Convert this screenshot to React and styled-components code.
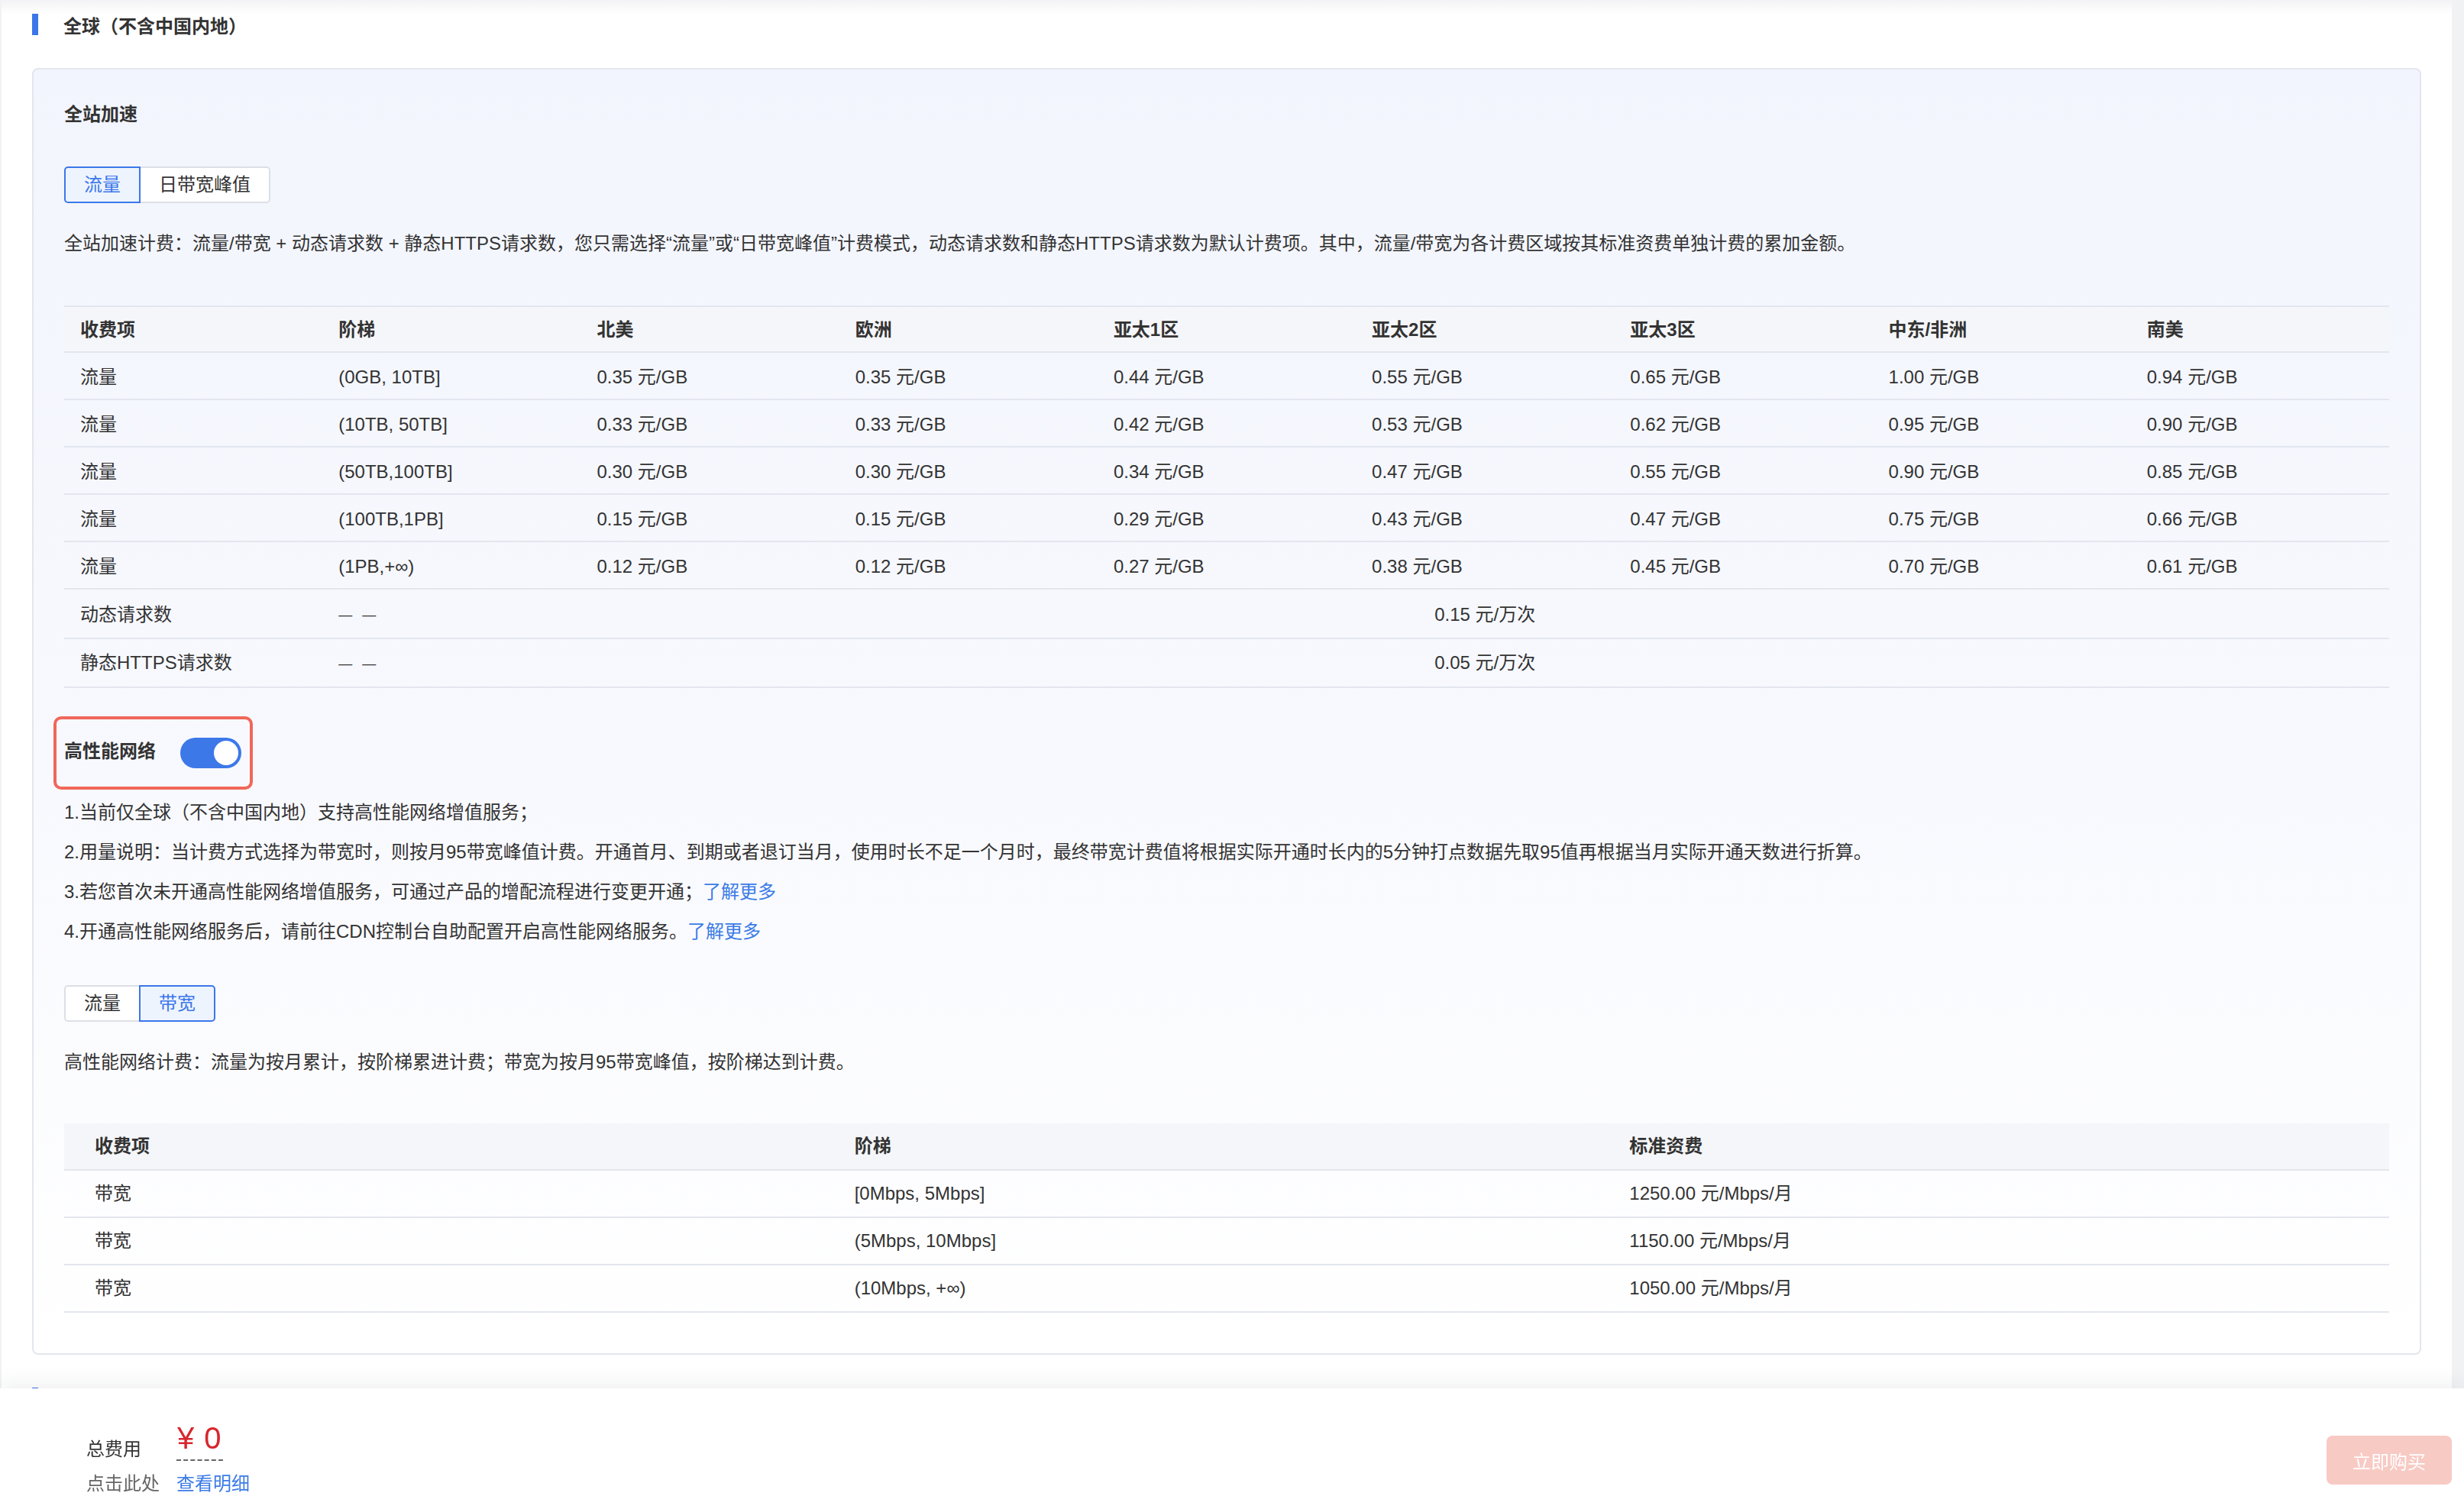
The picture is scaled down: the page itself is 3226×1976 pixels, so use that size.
import React from "react";
import styled, { createGlobalStyle } from "styled-components";

const Global = createGlobalStyle`
  html, body { margin: 0; padding: 0; height: 100%; overflow: hidden; }
  body {
    background: #f1f2f4;
    font-family: "Liberation Sans", "Noto Sans CJK SC", sans-serif;
    color: #333;
  }
  * { box-sizing: border-box; }
`;

const Shell = styled.div`
  display: flex;
  height: 100vh;
  padding-left: 2px;
  padding-right: 16px;
`;

const Panel = styled.main`
  flex: 1;
  background: linear-gradient(to bottom, #f3f3f5 0, #ffffff 18px);
  padding: 18px 40px 200px 40px;
  overflow: hidden;
`;

const SectionTitle = styled.div`
  display: flex;
  align-items: center;
  gap: 33px;
  height: 28px;
  font-size: 24px;
  font-weight: 600;
  color: #333;
  margin-top: ${(p) => p.$mt || 0}px;
  &::before {
    content: "";
    width: 8px;
    height: 28px;
    background: #3b77ea;
  }
`;

const Card = styled.section`
  margin-top: 43px;
  border: 2px solid #e3e6ee;
  border-radius: 8px;
  background: linear-gradient(to bottom, #f2f5fd 0%, #f8f9fe 55%, #ffffff 100%);
  padding: 41px 40px 53px 40px;
`;

const CardTitle = styled.div`
  font-size: 24px;
  line-height: 36px;
  font-weight: 600;
  color: #333;
`;

const TabGroup = styled.div`
  display: flex;
  margin-top: ${(p) => p.$mt}px;
`;

const Tab = styled.button`
  height: 48px;
  padding: 0 24px;
  font: inherit;
  font-size: 24px;
  line-height: 44px;
  border: 2px solid ${(p) => (p.$active ? "#3b77ea" : "#dcdfe6")};
  background: ${(p) => (p.$active ? "#eef4fe" : "#ffffff")};
  color: ${(p) => (p.$active ? "#3b77ea" : "#333")};
  position: relative;
  z-index: ${(p) => (p.$active ? 1 : 0)};
  margin-left: -2px;
  cursor: pointer;
  &:first-child { margin-left: 0; border-radius: 5px 0 0 5px; }
  &:last-child { border-radius: 0 5px 5px 0; }
`;

const Desc = styled.p`
  margin: 35px 0 0;
  font-size: 24px;
  line-height: 36px;
  color: #333;
  white-space: nowrap;
`;

const Table = styled.table`
  width: 100%;
  table-layout: fixed;
  border-collapse: separate;
  border-spacing: 0;
  margin-top: ${(p) => p.$mt}px;
  font-size: 24px;
  color: #333;
`;

const Th = styled.th`
  text-align: left;
  font-weight: 600;
  line-height: ${(p) => (p.$plain ? 60 : 56)}px;
  padding: ${(p) => (p.$plain ? 0 : 2)}px ${(p) => p.$pr || 21}px 0 ${(p) => p.$pl || 21}px;
  background: #f5f6f9;
  border-top: ${(p) => (p.$plain ? "none" : "2px solid #e3e6ee")};
  border-bottom: 2px solid #e3e6ee;
  white-space: nowrap;
`;

const Td = styled.td`
  text-align: ${(p) => (p.$center ? "center" : "left")};
  line-height: ${(p) => 60 - (p.$shift || 0)}px;
  padding: ${(p) => p.$shift || 0}px ${(p) => p.$pr || 21}px 0 ${(p) => p.$pl || 21}px;
  border-bottom: 2px solid #e3e6ee;
  white-space: nowrap;
`;

const Dash = styled.span`
  font-size: 18px;
  word-spacing: 8px;
  color: #333;
`;

const Highlight = styled.div`
  display: inline-flex;
  align-items: center;
  gap: 32px;
  height: 96px;
  margin: 37px 0 0 -14px;
  padding: 0 11px 0 10px;
  border: 4px solid #f0685a;
  border-radius: 10px;
`;

const ToggleLabel = styled.span`
  font-size: 24px;
  line-height: 32px;
  font-weight: 600;
  color: #333;
  padding-bottom: 5px;
`;

const Switch = styled.button`
  display: flex;
  justify-content: ${(p) => (p.$on ? "flex-end" : "flex-start")};
  align-items: center;
  width: 80px;
  height: 40px;
  padding: 4px;
  border: none;
  border-radius: 20px;
  background: ${(p) => (p.$on ? "#3d78e8" : "#c0c4cc")};
  cursor: pointer;
  &::after {
    content: "";
    width: 32px;
    height: 32px;
    border-radius: 50%;
    background: #fff;
  }
`;

const Notes = styled.ol`
  list-style: none;
  margin: 12px 0 0;
  padding: 0;
  display: flex;
  flex-direction: column;
  gap: 16px;
`;

const Note = styled.li`
  font-size: 24px;
  line-height: 36px;
  color: #333;
  white-space: nowrap;
`;

const Link = styled.a`
  color: #3b7be6;
  text-decoration: none;
  cursor: pointer;
`;

const Footer = styled.footer`
  position: fixed;
  left: 0;
  right: 0;
  bottom: 0;
  height: 158px;
  background: #fff;
  box-shadow: 0 -6px 26px rgba(30, 40, 60, 0.07);
  display: flex;
  justify-content: space-between;
  align-items: flex-start;
  padding: 0 16px 0 113px;
`;

const Summary = styled.div`
  display: grid;
  grid-template-columns: 118px auto;
  row-gap: 16px;
  margin-top: 44px;
  align-items: end;
`;

const SumLabel = styled.span`
  font-size: 24px;
  line-height: 28px;
  color: ${(p) => (p.$muted ? "#666" : "#333")};
  padding-bottom: ${(p) => (p.$muted ? 0 : 1)}px;
`;

const Price = styled.span`
  justify-self: start;
  font-size: 40px;
  line-height: 42px;
  color: #d8262d;
  padding: 0 1px 7px;
  border-bottom: 2px dashed #666;
  letter-spacing: 1px;
`;

const Buy = styled.button`
  margin-top: 62px;
  width: 164px;
  height: 64px;
  border: none;
  border-radius: 8px;
  background: #f8cac4;
  color: #fff;
  font: inherit;
  font-size: 24px;
  cursor: not-allowed;
`;

const regions = ["北美", "欧洲", "亚太1区", "亚太2区", "亚太3区", "中东/非洲", "南美"];
const flowRows = [
  ["(0GB, 10TB]", ["0.35", "0.35", "0.44", "0.55", "0.65", "1.00", "0.94"]],
  ["(10TB, 50TB]", ["0.33", "0.33", "0.42", "0.53", "0.62", "0.95", "0.90"]],
  ["(50TB,100TB]", ["0.30", "0.30", "0.34", "0.47", "0.55", "0.90", "0.85"]],
  ["(100TB,1PB]", ["0.15", "0.15", "0.29", "0.43", "0.47", "0.75", "0.66"]],
  ["(1PB,+∞)", ["0.12", "0.12", "0.27", "0.38", "0.45", "0.70", "0.61"]],
];
const bwRows = [
  ["[0Mbps, 5Mbps]", "1250.00 元/Mbps/月"],
  ["(5Mbps, 10Mbps]", "1150.00 元/Mbps/月"],
  ["(10Mbps, +∞)", "1050.00 元/Mbps/月"],
];

export default function App() {
  return (
    <>
      <Global />
      <Shell>
        <Panel>
          <SectionTitle>全球（不含中国内地）</SectionTitle>
          <Card>
            <CardTitle>全站加速</CardTitle>
            <TabGroup $mt={50}>
              <Tab $active>流量</Tab>
              <Tab>日带宽峰值</Tab>
            </TabGroup>
            <Desc>
              全站加速计费：流量/带宽 + 动态请求数 + 静态HTTPS请求数，您只需选择“流量”或“日带宽峰值”计费模式，动态请求数和静态HTTPS请求数为默认计费项。其中，流量/带宽为各计费区域按其标准资费单独计费的累加金额。
            </Desc>
            <Table $mt={63}>
              <thead>
                <tr>
                  <Th>收费项</Th>
                  <Th>阶梯</Th>
                  {regions.map((r) => (
                    <Th key={r}>{r}</Th>
                  ))}
                </tr>
              </thead>
              <tbody>
                {flowRows.map(([tier, prices]) => (
                  <tr key={tier}>
                    <Td $shift={3}>流量</Td>
                    <Td $shift={3}>{tier}</Td>
                    {prices.map((p, i) => (
                      <Td key={i} $shift={3}>{p} 元/GB</Td>
                    ))}
                  </tr>
                ))}
                <tr>
                  <Td $shift={1}>动态请求数</Td>
                  <Td $shift={1}><Dash>— —</Dash></Td>
                  <Td $shift={1} colSpan={7} $center>0.15 元/万次</Td>
                </tr>
                <tr>
                  <Td>静态HTTPS请求数</Td>
                  <Td><Dash>— —</Dash></Td>
                  <Td colSpan={7} $center>0.05 元/万次</Td>
                </tr>
              </tbody>
            </Table>

            <Highlight>
              <ToggleLabel>高性能网络</ToggleLabel>
              <Switch $on role="switch" aria-checked="true" />
            </Highlight>

            <Notes>
              <Note>1.当前仅全球（不含中国内地）支持高性能网络增值服务；</Note>
              <Note>
                2.用量说明：当计费方式选择为带宽时，则按月95带宽峰值计费。开通首月、到期或者退订当月，使用时长不足一个月时，最终带宽计费值将根据实际开通时长内的5分钟打点数据先取95值再根据当月实际开通天数进行折算。
              </Note>
              <Note>
                3.若您首次未开通高性能网络增值服务，可通过产品的增配流程进行变更开通；<Link>了解更多</Link>
              </Note>
              <Note>
                4.开通高性能网络服务后，请前往CDN控制台自助配置开启高性能网络服务。<Link>了解更多</Link>
              </Note>
            </Notes>

            <TabGroup $mt={52}>
              <Tab>流量</Tab>
              <Tab $active>带宽</Tab>
            </TabGroup>
            <Desc>高性能网络计费：流量为按月累计，按阶梯累进计费；带宽为按月95带宽峰值，按阶梯达到计费。</Desc>

            <Table $mt={62}>
              <thead>
                <tr>
                  <Th $plain $pl={40}>收费项</Th>
                  <Th $plain $pl={20}>阶梯</Th>
                  <Th $plain $pl={20}>标准资费</Th>
                </tr>
              </thead>
              <tbody>
                {bwRows.map(([tier, price]) => (
                  <tr key={tier}>
                    <Td $pl={40}>带宽</Td>
                    <Td $pl={20}>{tier}</Td>
                    <Td $pl={20}>{price}</Td>
                  </tr>
                ))}
              </tbody>
            </Table>
          </Card>
          <SectionTitle $mt={43}>中国内地</SectionTitle>
        </Panel>
      </Shell>
      <Footer>
        <Summary>
          <SumLabel>总费用</SumLabel>
          <Price>¥ 0</Price>
          <SumLabel $muted>点击此处</SumLabel>
          <SumLabel $muted>
            <Link>查看明细</Link>
          </SumLabel>
        </Summary>
        <Buy disabled>立即购买</Buy>
      </Footer>
    </>
  );
}
